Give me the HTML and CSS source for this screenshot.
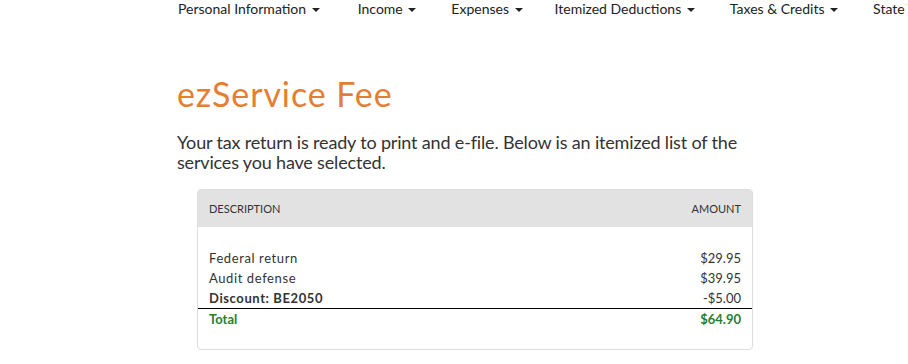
FILE: index.html
```html
<!DOCTYPE html>
<html>
  <head>
    <title>ezService Fee</title>
    <link rel="stylesheet" href="styles.css">
  </head>
  <body>
    <div class="nav">
      <span class="nav-item">Personal Information <span class="caret"></span></span>
      <span class="nav-item">Income <span class="caret"></span></span>
      <span class="nav-item">Expenses <span class="caret"></span></span>
      <span class="nav-item">Itemized Deductions <span class="caret"></span></span>
      <span class="nav-item">Taxes &amp; Credits <span class="caret"></span></span>
      <span class="nav-item">State Taxes <span class="caret"></span></span>
    </div>

    <div class="content">
      <h1 class="title">ezService Fee</h1>
      <p class="intro">Your tax return is ready to print and e-file. Below is an itemized list of the services you have selected.</p>

      <div class="fee-panel">
        <div class="fee-head">
          <span>Description</span>
          <span>Amount</span>
        </div>
        <div class="fee-body">
          <div class="fee-row"><span>Federal return</span><span>$29.95</span></div>
          <div class="fee-row"><span>Audit defense</span><span>$39.95</span></div>
          <div class="fee-row discount"><span class="label">Discount: BE2050</span><span>-$5.00</span></div>
          <div class="fee-row total"><span>Total</span><span>$64.90</span></div>
        </div>
      </div>
    </div>
  </body>
</html>
```

FILE: styles.css
```css
body {
  background: #fff;
  color: #333;
  font-family: 'Lato', sans-serif;
  margin: 0;
  overflow: hidden;
}

.nav {
  display: flex;
  gap: 35px;
  height: 20px;
  overflow: hidden;
  padding-left: 178px;
  white-space: nowrap;
}

.nav-item {
  color: #222;
  flex-shrink: 0;
  font-size: 14px;
  line-height: 18px;
}

.nav-item:first-child {
  margin-right: 3px;
}

.nav-item:nth-child(3) {
  margin-right: -3px;
}

.caret {
  border-left: 4px solid transparent;
  border-right: 4px solid transparent;
  border-top: 4px solid #222;
  display: inline-block;
  margin-left: 2px;
  vertical-align: middle;
}

.content {
  padding-left: 177px;
}

.title {
  color: #e67e31;
  font-size: 34px;
  font-weight: normal;
  letter-spacing: 0.9px;
  line-height: 40px;
  margin: 0;
  padding-top: 54px;
}

.intro {
  font-size: 18px;
  letter-spacing: -0.17px;
  line-height: 20px;
  margin: 18px 0 0;
  width: 575px;
}

.fee-panel {
  border: 1px solid #ddd;
  border-radius: 4px;
  margin: 17px 0 0 20px;
  overflow: hidden;
  width: 554px;
}

.fee-head {
  background: #e2e2e2;
  display: flex;
  font-size: 11px;
  height: 37px;
  justify-content: space-between;
  line-height: 37px;
  padding: 0 11px;
  text-transform: uppercase;
}

.fee-body {
  padding: 21px 0 20px;
}

.fee-row {
  display: flex;
  font-size: 13px;
  justify-content: space-between;
  line-height: 20px;
  padding: 0 11px;
}

.fee-row span:first-child {
  letter-spacing: 0.6px;
}

.discount {
  border-bottom: 1px solid #000;
}

.discount .label {
  font-weight: bold;
  letter-spacing: -0.3px;
}

.total {
  color: #2b7d2b;
  font-weight: bold;
}

.total span:first-child {
  letter-spacing: 0;
}
```
